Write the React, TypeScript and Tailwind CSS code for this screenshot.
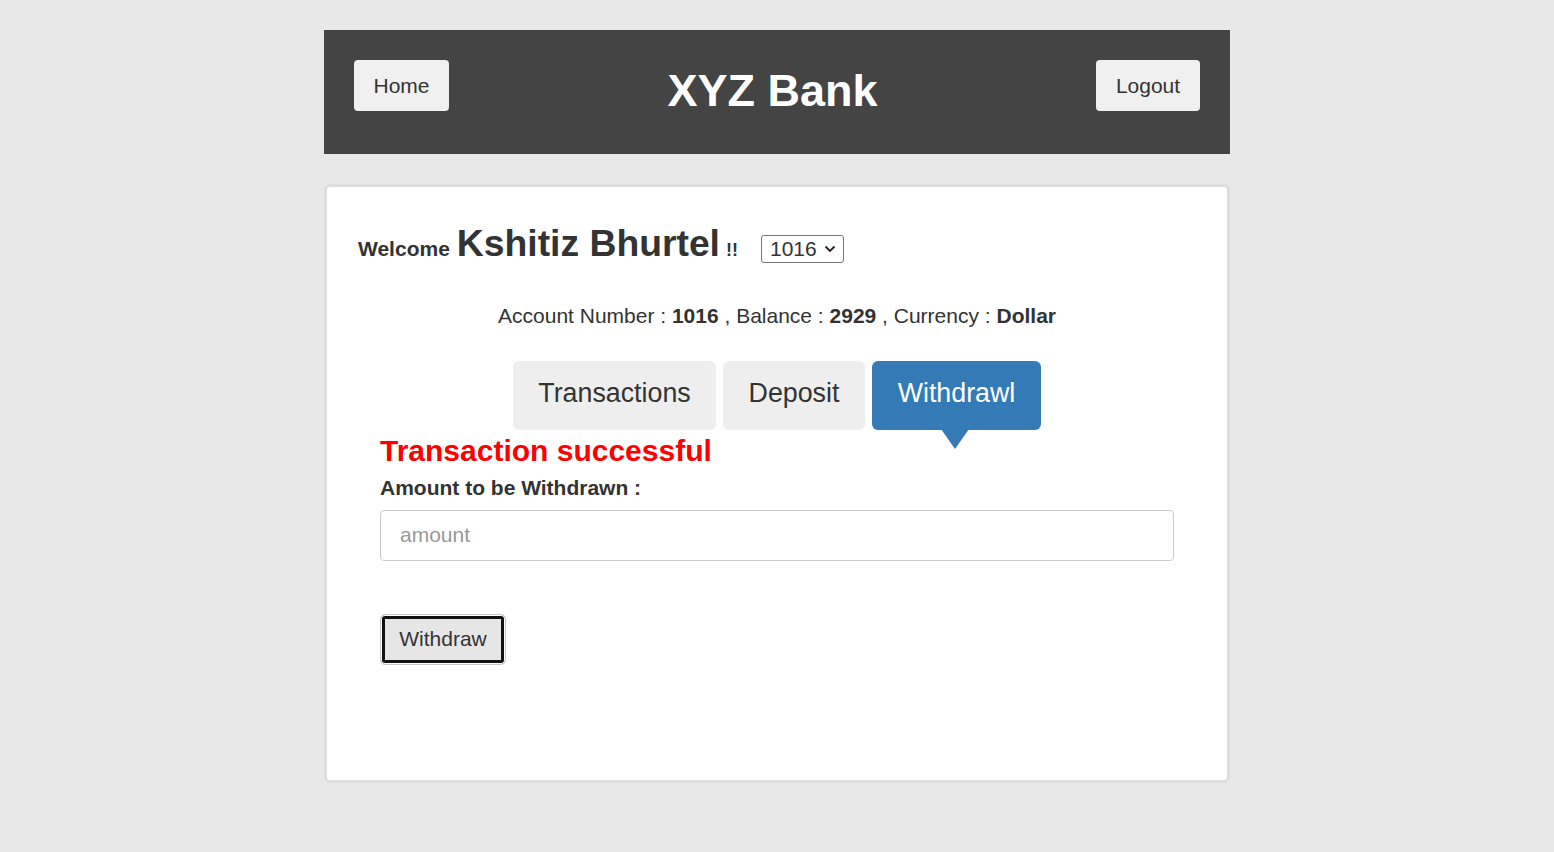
import React from "react";

export default function App() {
  return (
    <div
      className="min-h-[852px] w-full bg-[#e8e8e8] pt-[30px] text-[#333]"
      style={{ fontFamily: '"Liberation Sans", Arial, sans-serif' }}
    >
      <div className="mx-auto w-[906px]">
        {/* Header */}
        <div className="flex h-[124px] items-start justify-between bg-[#444] px-[30px] pt-[30px]">
          <button className="h-[51px] w-[95px] rounded-[4px] bg-[#f0f0f0] text-[21px] leading-none text-[#333]">
            Home
          </button>
          <h1 className="mt-[8px] text-[45px] font-bold leading-none text-white">XYZ Bank</h1>
          <button className="h-[51px] w-[104px] rounded-[4px] bg-[#f0f0f0] text-[21px] leading-none text-[#333]">
            Logout
          </button>
        </div>

        {/* Card */}
        <div className="mt-[30px] h-[599px] rounded-[6px] border-[3px] border-[#dedede] bg-white">
          <div className="flex items-baseline pl-[31px] pt-[38px]">
            <span className="text-[21px] font-bold leading-none">Welcome</span>
            <span className="ml-[7px] text-[37.3px] font-bold leading-none">Kshitiz Bhurtel</span>
            <span className="ml-[6px] text-[18px] font-bold leading-none">!!</span>
            <span className="ml-[23px] flex h-[28px] w-[83px] items-center rounded-[3px] border border-[#767676] pl-[8px] text-[21px] leading-none">
              <span>1016</span>
              <svg width="12" height="8" viewBox="0 0 12 8" className="ml-[7px]">
                <path d="M1.5 1.5 L6 6 L10.5 1.5" fill="none" stroke="#222" strokeWidth="1.8" />
              </svg>
            </span>
          </div>

          <div className="mt-[42px] text-center text-[21px] leading-none">
            Account Number : <b>1016</b> , Balance : <b>2929</b> , Currency : <b>Dollar</b>
          </div>

          <div className="mt-[35px] flex justify-center gap-[7px]">
            <button className="h-[69px] w-[203px] rounded-[6px] bg-[#eeeeee] pb-[4px] text-[26.8px] leading-none text-[#333]">
              Transactions
            </button>
            <button className="h-[69px] w-[142px] rounded-[6px] bg-[#eeeeee] pb-[4px] text-[26.8px] leading-none text-[#333]">
              Deposit
            </button>
            <div className="relative">
              <button className="h-[69px] w-[169px] rounded-[6px] bg-[#337ab7] pb-[4px] text-[26.8px] leading-none text-white">
                Withdrawl
              </button>
              <svg
                width="28"
                height="20"
                viewBox="0 0 28 20"
                className="absolute left-[69px] top-[68px]"
              >
                <path d="M0 0 L28 0 L14 20 Z" fill="#337ab7" />
              </svg>
            </div>
          </div>

          <div className="px-[53px]">
            <div className="mt-[6px] text-[30px] font-bold leading-none text-[#ff0000]">
              Transaction successful
            </div>
            <div className="mt-[11px] text-[21px] font-bold leading-none">Amount to be Withdrawn :</div>
            <input
              placeholder="amount"
              className="mt-[12px] block h-[51px] w-full rounded-[4px] border border-[#cccccc] px-[19px] text-[21px] text-[#555] outline-none placeholder:text-[#999]"
              style={{ fontFamily: '"Liberation Sans", Arial, sans-serif' }}
            />
            <button className="mt-[53px] h-[51px] w-[126px] rounded-[5px] border border-[#c8c8c8] bg-[#e6e6e6] pb-[2px] text-[21px] leading-none text-[#333] shadow-[inset_0_0_0_1px_#ffffff,inset_0_0_0_4px_#111111]">
              Withdraw
            </button>
          </div>
        </div>
      </div>
    </div>
  );
}
